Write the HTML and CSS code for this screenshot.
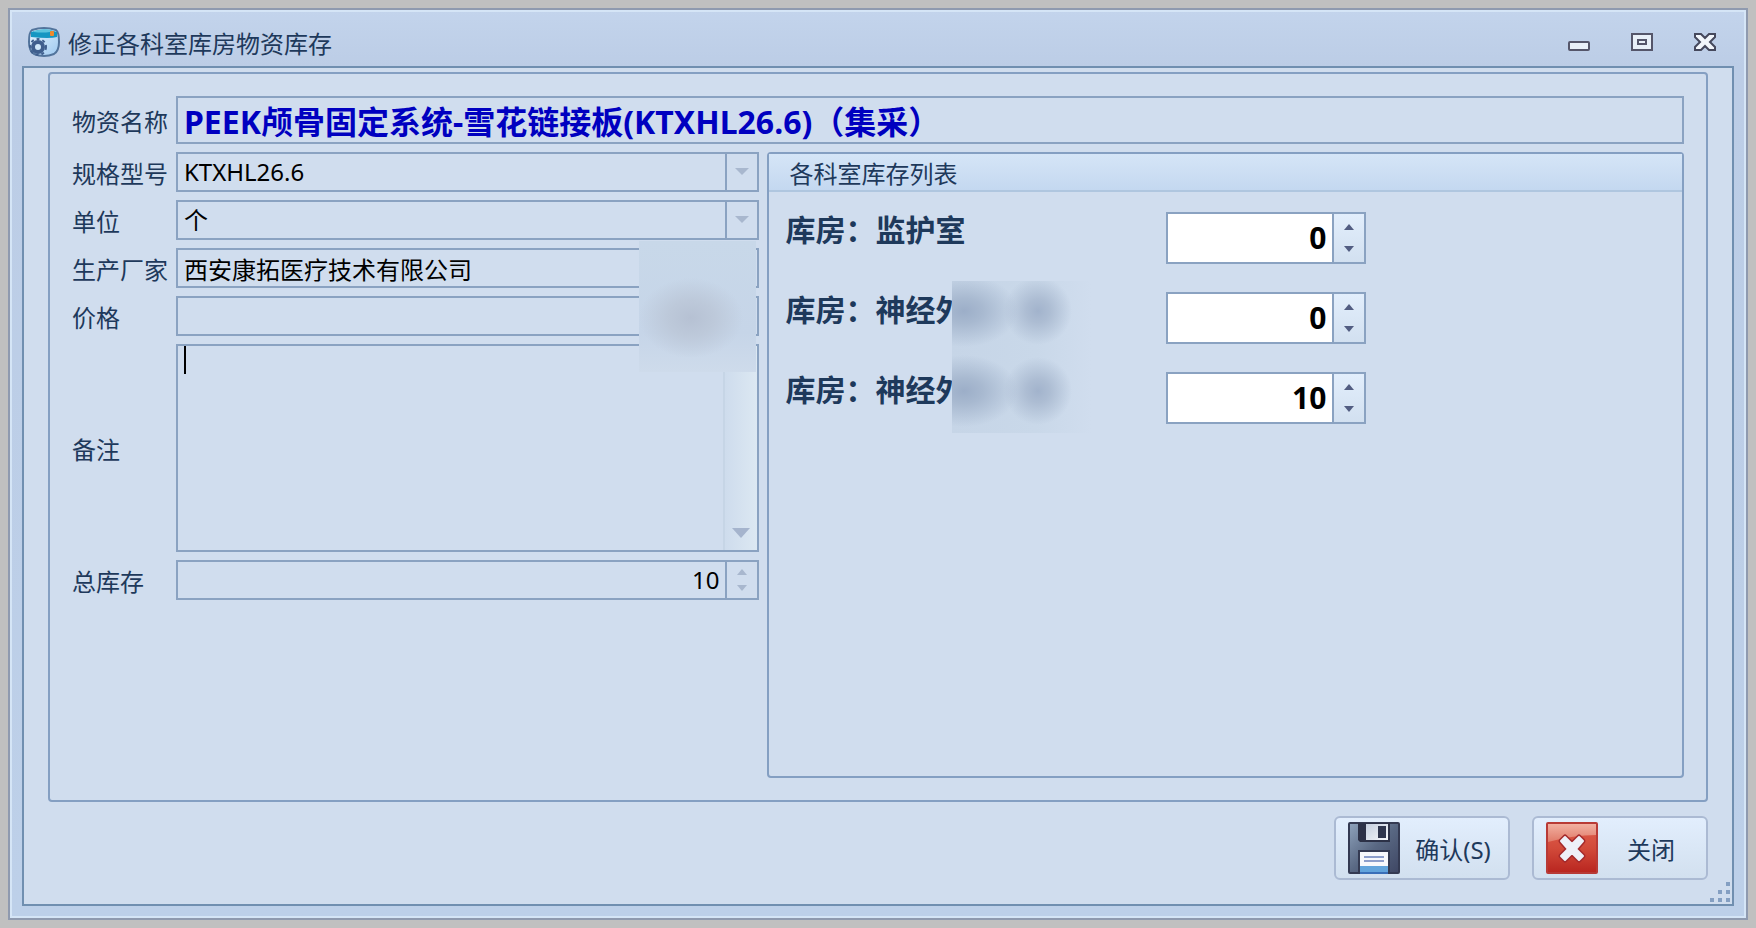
FILE: index.html
```html
<!DOCTYPE html>
<html lang="zh-CN">
<head>
    <meta charset="UTF-8">
    <meta name="viewport" content="width=device-width, initial-scale=1.0">
    <title>修正各科室库房物资库存</title>
    <link rel="stylesheet" href="styles.css">
</head>
<body>
    <div class="window">
        <header class="titlebar">
            <svg class="app-icon" viewBox="0 0 32 32">
                <defs>
                    <linearGradient id="boxFill" x1="0" y1="0" x2="1" y2="1">
                        <stop offset="0" stop-color="#e8f6ff"/>
                        <stop offset="1" stop-color="#9cc8f0"/>
                    </linearGradient>
                </defs>
                <path d="M4 4Q16 0 28 4Q31 6 31 16Q31 25 26 28Q16 32 6 28Q1 25 1 16Q1 6 4 4Z" fill="url(#boxFill)" stroke="#52749c" stroke-width="2"/>
                <path d="M3 6Q16 1 29 6L29 11Q22 13 3 11Z" fill="#1596c2"/>
                <path d="M6 5Q16 2 24 4L22 6Q14 7 6 6Z" fill="#5cc4de"/>
                <rect x="22" y="5" width="4" height="5" rx="1" fill="#f08a2c"/>
                <circle cx="10" cy="21" r="5" fill="#cfe8fa" stroke="#3f5f8e" stroke-width="4"/>
                <circle cx="10" cy="21" r="8" fill="none" stroke="#3f5f8e" stroke-width="2" stroke-dasharray="3 3"/>
            </svg>
            <h1>修正各科室库房物资库存</h1>
            <div class="window-buttons">
                <button type="button" aria-label="最小化">
                    <svg viewBox="0 0 22 20"><rect x="1" y="10" width="20" height="8" rx="1" fill="#e9f0f8" stroke="#55566a" stroke-width="2"/></svg>
                </button>
                <button type="button" aria-label="最大化">
                    <svg viewBox="0 0 22 20"><path d="M1 2H21V18H1Z" fill="#e9f0f8" stroke="#55566a" stroke-width="2"/><path d="M7 8H15V12H7Z" fill="#e9f0f8" stroke="#55566a" stroke-width="2"/></svg>
                </button>
                <button type="button" aria-label="关闭窗口">
                    <svg viewBox="0 0 22 20"><path d="M1 2H7L11 6L15 2H21V5L16 10L21 15V18H15L11 14L7 18H1V15L6 10L1 5Z" fill="#f2f6fb" stroke="#45485c" stroke-width="2"/></svg>
                </button>
            </div>
        </header>

        <form class="client">
            <div class="panel">
                <div class="row name-row">
                    <label for="name">物资名称</label>
                    <input class="box name" id="name" type="text" value="PEEK颅骨固定系统-雪花链接板(KTXHL26.6)（集采）" readonly>
                </div>
                <div class="columns">
                    <div class="fields">
                        <div class="row">
                            <label for="spec">规格型号</label>
                            <div class="box combo">
                                <select id="spec"><option>KTXHL26.6</option></select>
                                <svg class="arrow" viewBox="0 0 30 36"><path d="M8 14H22L15 21Z" fill="#a8b7ce"/></svg>
                            </div>
                        </div>
                        <div class="row">
                            <label for="unit">单位</label>
                            <div class="box combo">
                                <select id="unit"><option>个</option></select>
                                <svg class="arrow" viewBox="0 0 30 36"><path d="M8 14H22L15 21Z" fill="#a8b7ce"/></svg>
                            </div>
                        </div>
                        <div class="row">
                            <label for="maker">生产厂家</label>
                            <input class="box" id="maker" type="text" value="西安康拓医疗技术有限公司" readonly>
                        </div>
                        <div class="row">
                            <label for="price">价格</label>
                            <input class="box" id="price" type="text" readonly>
                        </div>
                        <div class="row note-row">
                            <label for="note">备注</label>
                            <div class="box note">
                                <span class="caret"></span>
                                <textarea id="note"></textarea>
                                <div class="scrollbar">
                                    <svg viewBox="0 0 18 10"><path d="M0 0H18L9 10Z" fill="#a5b4cd"/></svg>
                                </div>
                            </div>
                        </div>
                        <div class="row">
                            <label for="total">总库存</label>
                            <div class="box spin">
                                <input id="total" type="text" value="10" readonly>
                                <div class="steps">
                                    <button type="button" aria-label="增加"><svg viewBox="0 0 10 6"><path d="M0 6L5 0L10 6Z"/></svg></button>
                                    <button type="button" aria-label="减少"><svg viewBox="0 0 10 6"><path d="M0 0L5 6L10 0Z"/></svg></button>
                                </div>
                            </div>
                        </div>
                        <div class="mask mask-price"></div>
                    </div>

                    <section class="stock">
                        <h2>各科室库存列表</h2>
                        <div class="stock-list">
                            <div class="stock-row">
                                <label for="s1">库房：监护室</label>
                                <div class="box spin large">
                                    <input id="s1" type="text" value="0">
                                    <div class="steps">
                                        <button type="button" aria-label="增加"><svg viewBox="0 0 10 6"><path d="M0 6L5 0L10 6Z"/></svg></button>
                                        <button type="button" aria-label="减少"><svg viewBox="0 0 10 6"><path d="M0 0L5 6L10 0Z"/></svg></button>
                                    </div>
                                </div>
                            </div>
                            <div class="stock-row">
                                <label for="s2">库房：神经外</label>
                                <div class="box spin large">
                                    <input id="s2" type="text" value="0">
                                    <div class="steps">
                                        <button type="button" aria-label="增加"><svg viewBox="0 0 10 6"><path d="M0 6L5 0L10 6Z"/></svg></button>
                                        <button type="button" aria-label="减少"><svg viewBox="0 0 10 6"><path d="M0 0L5 6L10 0Z"/></svg></button>
                                    </div>
                                </div>
                            </div>
                            <div class="stock-row">
                                <label for="s3">库房：神经外</label>
                                <div class="box spin large">
                                    <input id="s3" type="text" value="10">
                                    <div class="steps">
                                        <button type="button" aria-label="增加"><svg viewBox="0 0 10 6"><path d="M0 6L5 0L10 6Z"/></svg></button>
                                        <button type="button" aria-label="减少"><svg viewBox="0 0 10 6"><path d="M0 0L5 6L10 0Z"/></svg></button>
                                    </div>
                                </div>
                            </div>
                            <div class="mask mask-room"></div>
                        </div>
                    </section>
                </div>
            </div>

            <footer class="actions">
                <button class="action" type="button">
                    <svg viewBox="0 0 52 52">
                        <defs>
                            <linearGradient id="disk" x1="0" y1="0" x2="1" y2="1">
                                <stop offset="0" stop-color="#8fa3bc"/>
                                <stop offset="0.5" stop-color="#596883"/>
                                <stop offset="1" stop-color="#3e4663"/>
                            </linearGradient>
                            <linearGradient id="shutter" x1="0" y1="0" x2="1" y2="1">
                                <stop offset="0" stop-color="#c5cfdf"/>
                                <stop offset="1" stop-color="#f5f7fb"/>
                            </linearGradient>
                        </defs>
                        <rect x="1" y="1" width="50" height="50" rx="1" fill="url(#disk)" stroke="#343a52" stroke-width="2"/>
                        <path d="M10 1H42V20H12L10 18Z" fill="#2c3147"/>
                        <path d="M18 2H40V18H18Z" fill="url(#shutter)"/>
                        <path d="M30 4H38V16H30Z" fill="#2f364e"/>
                        <path d="M10 28H42V52H10Z" fill="#343a52"/>
                        <path d="M12 30H40V44H12Z" fill="#f7f8fc"/>
                        <path d="M12 44H40V52H12Z" fill="#62a4dc"/>
                        <path d="M12 50H40V52H12Z" fill="#3a6fb8"/>
                        <path d="M16 34H36V36H16ZM16 38H36V40H16Z" fill="#8d9ecb"/>
                    </svg>
                    <span>确认(S)</span>
                </button>
                <button class="action" type="button">
                    <svg viewBox="0 0 52 52">
                        <defs>
                            <linearGradient id="red" x1="0" y1="0" x2="0" y2="1">
                                <stop offset="0" stop-color="#e0604e"/>
                                <stop offset="0.5" stop-color="#d24a3a"/>
                                <stop offset="1" stop-color="#b8251f"/>
                            </linearGradient>
                            <linearGradient id="gloss" x1="0" y1="0" x2="0" y2="1">
                                <stop offset="0" stop-color="#f6c4b6"/>
                                <stop offset="1" stop-color="#e38472"/>
                            </linearGradient>
                        </defs>
                        <rect x="1" y="1" width="50" height="50" rx="1" fill="url(#red)" stroke="#b83a36" stroke-width="2"/>
                        <path d="M2 2H50V13Q28 13 2 20Z" fill="url(#gloss)" opacity="0.8"/>
                        <path d="M19 15L26 22L33 15L37 19L30 27L37 34L33 38L26 31L19 38L15 34L22 27L15 19Z" fill="#eef0f8" stroke="#a52a2c" stroke-width="5" stroke-linejoin="round"/>
                        <path d="M19 15L26 22L33 15L37 19L30 27L37 34L33 38L26 31L19 38L15 34L22 27L15 19Z" fill="#eef0f8" stroke="#eef0f8" stroke-width="2" stroke-linejoin="round"/>
                    </svg>
                    <span>关闭</span>
                </button>
            </footer>
            <svg class="grip" viewBox="0 0 20 20"><path d="M16 0h4v4h-4zM8 8h4v4h-4zM16 8h4v4h-4zM0 16h4v4h-4zM8 16h4v4h-4zM16 16h4v4h-4z" fill="#849fc2"/></svg>
        </form>
    </div>
</body>
</html>
```

FILE: styles.css
```css
* {
    margin: 0;
    padding: 0;
    box-sizing: border-box;
}

body {
    display: flex;
    min-height: 100vh;
    padding: 8px;
    background-color: #c0c0c0;
    color: #1e395b;
    font-family: "Noto Sans", "Noto Sans CJK SC", sans-serif;
    font-size: 24px;
    line-height: 32px;
}

button,
input,
select,
textarea {
    border: 0;
    border-radius: 0;
    outline: 0;
    background: none;
    color: #000;
    font: inherit;
}

svg {
    display: block;
}

.window {
    flex: 1;
    display: flex;
    flex-direction: column;
    padding: 0 12px 12px;
    border: 2px solid #8f9aaf;
    box-shadow: inset 0 0 0 2px #d5e5f6;
    background: linear-gradient(#c3d4ec, #bccde6 56px, #bdd0e9);
}

/* title bar */
.titlebar {
    display: flex;
    align-items: center;
    height: 56px;
    padding: 8px 18px 0 6px;
}

.app-icon {
    width: 32px;
    height: 32px;
    margin-right: 8px;
}

.titlebar h1 {
    flex: 1;
    padding-top: 4px;
    font-size: 24px;
    font-weight: normal;
}

.window-buttons {
    display: flex;
    gap: 41px;
}

.window-buttons svg {
    width: 22px;
    height: 20px;
}

.client {
    flex: 1;
    display: flex;
    flex-direction: column;
    position: relative;
    padding: 4px 24px 24px;
    border: 2px solid #708fb0;
    background-color: #d0ddee;
}

.panel {
    flex: 1;
    display: flex;
    flex-direction: column;
    gap: 8px;
    padding: 22px;
    border: 2px solid #849fc2;
    border-radius: 4px;
}

.columns {
    flex: 1;
    display: grid;
    grid-template-columns: 3fr 4fr;
    gap: 8px;
}

/* form rows */
.row {
    display: grid;
    grid-template-columns: 104px 1fr;
    align-items: center;
    height: 40px;
}

.row label {
    padding-top: 4px;
}

.name-row {
    height: 48px;
}

.note-row {
    height: 208px;
}

.fields {
    display: flex;
    flex-direction: column;
    gap: 8px;
    position: relative;
}

.box {
    width: 100%;
    height: 100%;
    min-width: 0;
    padding: 0 6px;
    border: 2px solid #8aa2c1;
}

.name {
    color: #0000c0;
    font-size: 32px;
    font-weight: bold;
}

.combo,
.note,
.spin {
    display: flex;
    padding: 0;
}

.combo select {
    flex: 1;
    padding: 0 6px;
    appearance: none;
}

.arrow {
    width: 32px;
    border-left: 2px solid #8aa2c1;
}

.note {
    position: relative;
}

.note textarea {
    flex: 1;
    resize: none;
    padding: 0 6px;
}

.caret {
    position: absolute;
    top: 0;
    left: 6px;
    width: 2px;
    height: 28px;
    background-color: #000;
}

.scrollbar {
    display: flex;
    align-items: flex-end;
    justify-content: center;
    width: 34px;
    padding-bottom: 12px;
    border-left: 2px solid #c6d5e6;
    background: linear-gradient(to right, #cedced, #dce8f2);
}

.scrollbar svg {
    width: 18px;
    height: 10px;
}

/* number boxes */
.spin input {
    flex: 1;
    min-width: 0;
    padding: 0 6px;
    text-align: right;
}

.steps {
    display: flex;
    flex-direction: column;
    justify-content: space-around;
    width: 32px;
    padding: 2px 0;
    border-left: 2px solid #8aa2c1;
}

.steps button {
    display: flex;
    justify-content: center;
}

.steps svg {
    width: 10px;
    height: 6px;
    fill: #a8b7ce;
}

.large {
    width: 200px;
    height: 52px;
    background-color: #fff;
    font-size: 30px;
    font-weight: bold;
}

.large .steps {
    background: linear-gradient(#e2eefc, #d2e0f0);
}

.large .steps svg {
    fill: #525d82;
}

/* stock list */
.stock {
    border: 2px solid #849fc2;
    border-radius: 4px;
}

.stock h2 {
    height: 38px;
    padding-left: 20px;
    border-bottom: 2px solid #afc6df;
    background: linear-gradient(#d5e5f7, #c4d8f0);
    font-size: 24px;
    font-weight: normal;
    line-height: 40px;
}

.stock-list {
    display: flex;
    flex-direction: column;
    gap: 28px;
    position: relative;
    padding: 20px 16px;
}

.stock-row {
    display: grid;
    grid-template-columns: 381px 200px;
}

.stock-row label {
    font-size: 30px;
    font-weight: bold;
    line-height: 36px;
}

/* hidden values */
.mask {
    position: absolute;
}

.mask-price {
    top: 89px;
    right: 3px;
    width: 117px;
    height: 131px;
    background:
        radial-gradient(ellipse 52px 40px at 52px 77px, #b6c1d3, #bdc9da 45%, transparent),
        linear-gradient(#c8d8e9, #c6d5e8 70%, #cedbeb);
}

.mask-room {
    top: 89px;
    left: 183px;
    width: 140px;
    height: 152px;
    background:
        radial-gradient(ellipse 54px 36px at 12px 30px, #9caec8, #a8b9d0 35%, transparent),
        radial-gradient(ellipse 34px 34px at 86px 30px, #a2b3cc, #adbdd3 35%, transparent),
        radial-gradient(ellipse 54px 36px at 12px 110px, #9caec8, #a8b9d0 35%, transparent),
        radial-gradient(ellipse 34px 34px at 86px 110px, #a2b3cc, #adbdd3 35%, transparent),
        linear-gradient(to right, #c6d5e7, #c9d8e9 60%, #d0ddee);
}

/* bottom buttons */
.actions {
    display: flex;
    justify-content: flex-end;
    gap: 22px;
    padding-top: 14px;
}

.action {
    display: flex;
    align-items: center;
    width: 176px;
    height: 64px;
    padding: 0 2px 0 12px;
    border: 2px solid #abbad3;
    border-radius: 6px;
    background: linear-gradient(#e2eefd, #d2e0ef);
    color: #1e395b;
}

.action svg {
    width: 52px;
    height: 52px;
}

.action span {
    flex: 1;
    padding-top: 4px;
    text-align: center;
}

.grip {
    position: absolute;
    right: 2px;
    bottom: 2px;
    width: 20px;
    height: 20px;
}
```
